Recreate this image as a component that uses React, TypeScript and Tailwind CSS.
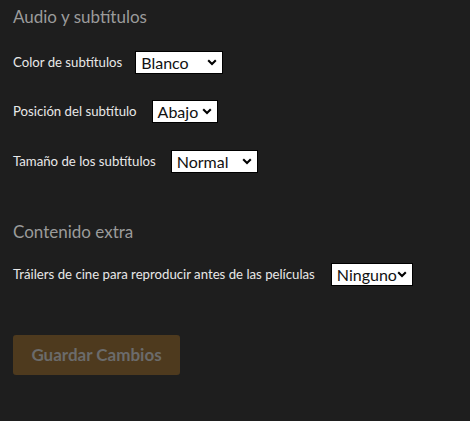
import React from "react";

function Chevron() {
  return (
    <svg width="10" height="7" viewBox="0 0 10 7" className="shrink-0">
      <path d="M1.2 1.3 L5 5 L8.8 1.3" fill="none" stroke="#000" strokeWidth="2.1" />
    </svg>
  );
}

function FakeSelect({ value, width }: { value: string; width: string }) {
  return (
    <div
      className={`flex h-[23px] items-center justify-between border border-black bg-white pl-[5px] pr-[5px] text-[16px] leading-none text-[#111]`}
      style={{ fontFamily: 'Lato, sans-serif' }}
    >
      <span className={`${width}`}>{value}</span>
      <Chevron />
    </div>
  );
}

function Row({ label, value, width, className, gap }: { label: string; value: string; width: string; className?: string; gap: string }) {
  return (
    <div className={`flex items-center ${className ?? ""}`}>
      <span className={`text-[13.2px] text-[#e8e8e8] ${gap}`}>{label}</span>
      <FakeSelect value={value} width={width} />
    </div>
  );
}

export default function App() {
  return (
    <div
      className="min-h-[421px] w-[470px] bg-[#1e1e1e] px-[13px] pt-[6px]"
      style={{ fontFamily: 'Lato, "Open Sans", sans-serif' }}
    >
      <h2 className="text-[17px] leading-[22px] text-[#9b9b9b]">Audio y subtítulos</h2>
      <Row className="mt-[23px]" gap="mr-[13px]" label="Color de subtítulos" value="Blanco" width="w-[66px]" />
      <Row className="mt-[26px]" gap="mr-[15px]" label="Posición del subtítulo" value="Abajo" width="w-[44px]" />
      <Row className="mt-[27px]" gap="mr-[15px]" label="Tamaño de los subtítulos" value="Normal" width="w-[65px]" />
      <h2 className="mt-[48px] text-[17px] leading-[22px] text-[#9b9b9b]">Contenido extra</h2>
      <Row className="mt-[20px]" gap="mr-[16px]" label="Tráilers de cine para reproducir antes de las películas" value="Ninguno" width="w-[60px]" />
      <button
        className="mt-[49px] h-[40px] w-[167px] rounded-[3px] bg-[#4e3a1e] text-[17px] font-bold text-[#6b6b6b]"
        style={{ fontFamily: 'Lato, sans-serif' }}
      >
        Guardar Cambios
      </button>
    </div>
  );
}
